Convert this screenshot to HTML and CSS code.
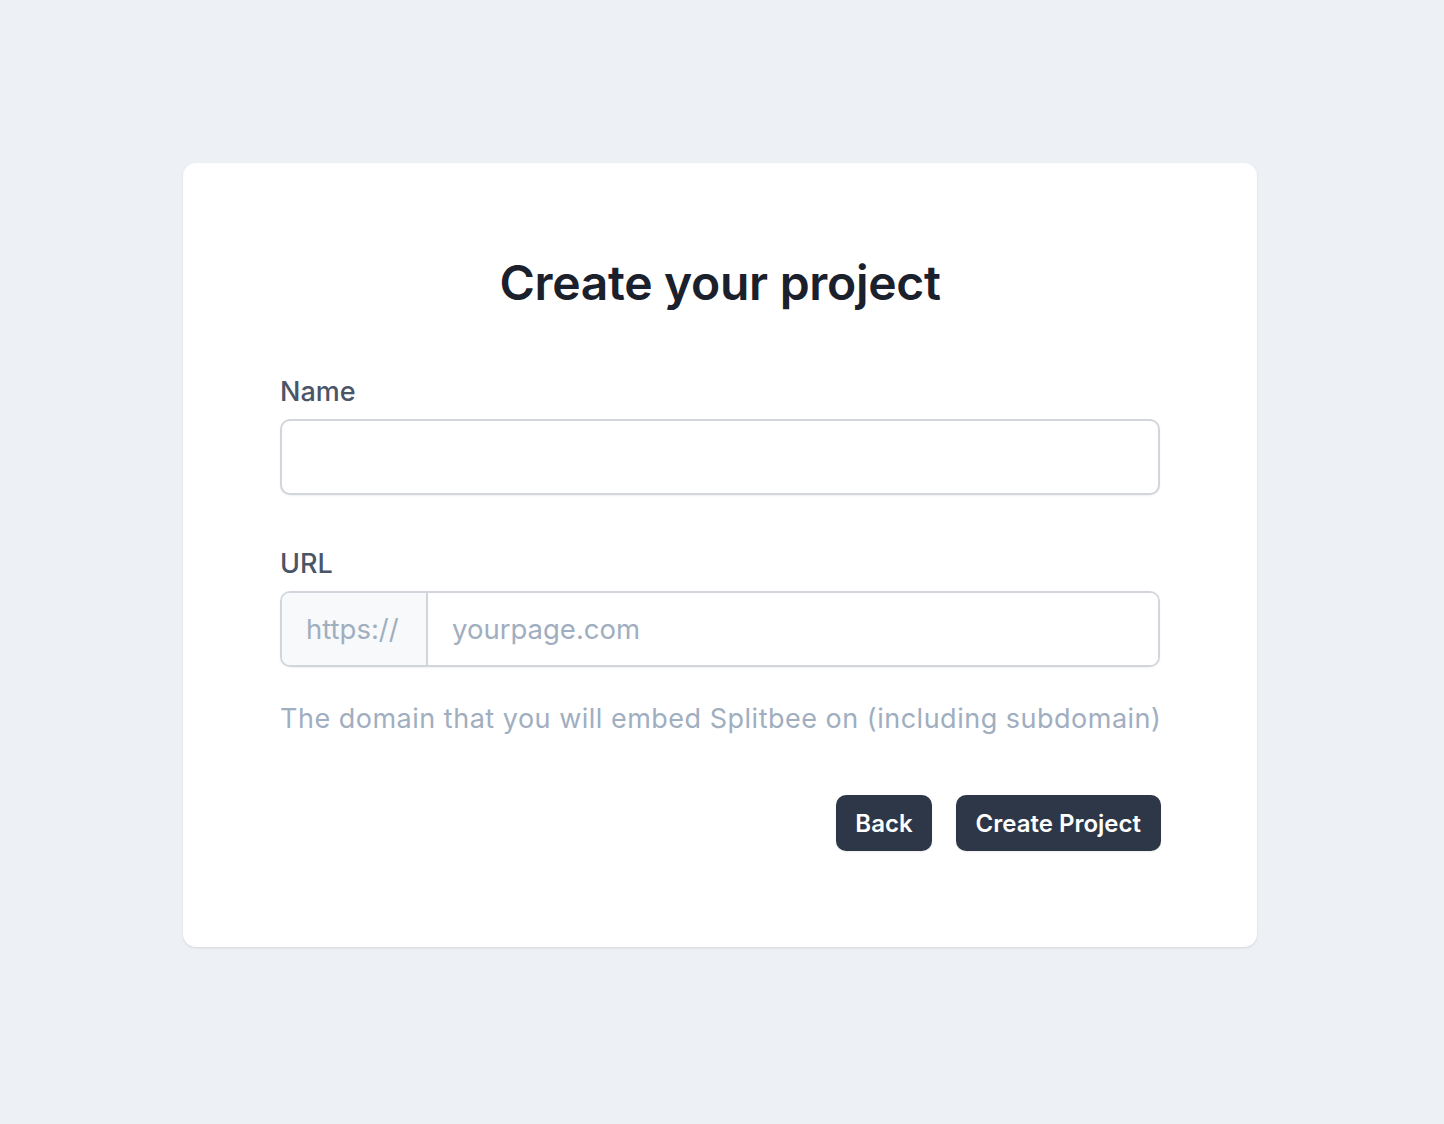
FILE: index.html
```html
<!DOCTYPE html>
<html lang="en">
<head>
<meta charset="utf-8">
<title>Create your project</title>
<link rel="stylesheet" href="styles.css">
</head>
<body>
<main class="page">
  <section class="card">
    <h1 class="title">Create your project</h1>
    <form class="form">
      <div class="field">
        <label class="label" for="name">Name</label>
        <input class="input" id="name" type="text">
      </div>
      <div class="field field-url">
        <label class="label" for="url">URL</label>
        <div class="group">
          <span class="prefix">https://</span>
          <input class="group-input" id="url" type="text" placeholder="yourpage.com">
        </div>
        <p class="help">The domain that you will embed Splitbee on (including subdomain)</p>
      </div>
      <div class="actions">
        <button type="button" class="btn btn-back">Back</button>
        <button type="button" class="btn">Create Project</button>
      </div>
    </form>
  </section>
</main>
</body>
</html>
```

FILE: styles.css
```css
* { box-sizing: border-box; }
html, body { margin: 0; padding: 0; }
body {
  background: #edf0f5;
  font-family: Inter, "Noto Sans", sans-serif;
  min-height: 1124px;
}
.page {
  display: flex;
  justify-content: center;
  padding: 163px 4px 0 0;
}
.card {
  width: 1074px;
  height: 784px;
  background: #fff;
  border-radius: 13px;
  box-shadow: 0 1px 3px rgba(0,0,0,0.08), 0 1px 2px rgba(0,0,0,0.04);
  padding: 88px 97px 0;
}
.title {
  margin: 0;
  text-align: center;
  font-size: 48px;
  font-weight: 600;
  line-height: 64px;
  color: #1a202c;
  letter-spacing: -0.3px;
}
.form { margin-top: 60px; }
.field { display: flex; flex-direction: column; }
.label {
  font-size: 27px;
  font-weight: 500;
  line-height: 34px;
  color: #4a5568;
}
.input {
  margin-top: 10px;
  height: 76px;
  border: 2px solid #d2d6dc;
  border-radius: 10px;
  box-shadow: 0 1px 2px rgba(0,0,0,0.06);
  font-family: inherit;
  font-size: 27px;
  padding: 0 22px;
  outline: none;
  background: #fff;
}
.field-url { margin-top: 52px; }
.group {
  margin-top: 10px;
  display: flex;
  height: 76px;
  border: 2px solid #d2d6dc;
  border-radius: 10px;
  box-shadow: 0 1px 2px rgba(0,0,0,0.06);
  overflow: hidden;
}
.prefix {
  display: flex;
  align-items: center;
  padding: 0 24px;
  width: 146px;
  background: #f7f9fb;
  border-right: 2px solid #d2d6dc;
  color: #a0aec0;
  font-size: 27.5px;
}
.group-input {
  flex: 1;
  border: 0;
  outline: none;
  font-family: inherit;
  font-size: 27.5px;
  padding: 0 24px;
  color: #1a202c;
}
.group-input::placeholder { color: #a0aec0; opacity: 1; }
.help {
  margin: 32px 0 0;
  font-size: 27px;
  letter-spacing: 0.5px;
  white-space: nowrap;
  line-height: 40px;
  color: #a0aec0;
}
.actions {
  margin-top: 56px;
  display: flex;
  justify-content: flex-end;
  gap: 24px;
  margin-right: -1px;
}
.btn {
  height: 56px;
  padding: 0 20px;
  background: #2d3748;
  color: #fff;
  border: 0;
  border-radius: 10px;
  font-family: inherit;
  font-size: 24px;
  font-weight: 600;
  box-shadow: 0 1px 2px rgba(0,0,0,0.08);
  cursor: pointer;
}
.btn-back { padding: 0 19px; }
```
